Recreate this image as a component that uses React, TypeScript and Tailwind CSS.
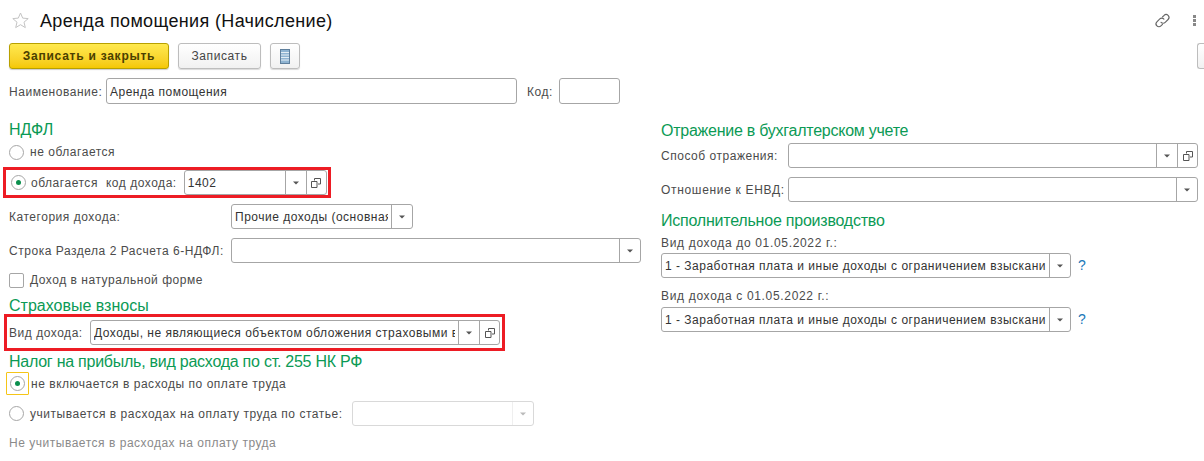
import React from 'react';

const labelCls = 'text-[12px] leading-[16px] text-[#4b4b4b] tracking-[0.53px] whitespace-nowrap';

const Caret = () => (
  <svg width="6" height="4" viewBox="0 0 6 4" className="block">
    <path d="M0 .5h6L3 3.500z" fill="#555" />
  </svg>
);

const OpenIcon = () => (
  <svg width="10" height="10" viewBox="0 0 10 10" fill="none" stroke="#555" className="block">
    <path d="M3.500 2.500V.5h6v5.500H7" />
    <path d="M.5 3.500h5.500v6H.5z" />
  </svg>
);

interface FieldProps {
  width: string;
  text?: string;
  dropdown?: boolean;
  open?: boolean;
  disabled?: boolean;
}

const Field: React.FC<FieldProps> = ({ width, text, dropdown, open, disabled }) => (
  <div className={`${width} h-[25px] shrink-0 flex items-stretch rounded-[3px] border bg-white ${disabled ? 'border-[#d9d9d9]' : 'border-[#a6a6a6]'}`}>
    <div className="flex-1 min-w-0 overflow-hidden mx-[3px] flex items-center text-[12px] text-[#333] tracking-[0.5px] whitespace-nowrap">{text}</div>
    {dropdown && (
      <div className={`w-[21px] flex items-center justify-center border-l ${disabled ? 'border-[#d9d9d9] opacity-40' : 'border-[#a6a6a6]'}`}>
        <Caret />
      </div>
    )}
    {open && (
      <div className="w-[20px] flex items-center justify-center border-l border-[#a6a6a6]">
        <OpenIcon />
      </div>
    )}
  </div>
);

const Radio = ({ checked }: { checked?: boolean }) => (
  <span className="w-[15px] h-[15px] shrink-0 rounded-full border border-[#a6a6a6] bg-white flex items-center justify-center">
    {checked && <span className="w-[5px] h-[5px] rounded-full bg-[#0b8f4d]" />}
  </span>
);

const Heading = ({ children, className }: { children: React.ReactNode; className?: string }) => (
  <div className={`text-[16px] leading-[18px] text-[#0b9a55] whitespace-nowrap ${className ?? ''}`}>{children}</div>
);

const App: React.FC = () => {
  return (
    <div className="w-[1204px] h-[461px] overflow-hidden bg-white font-['Liberation_Sans',sans-serif]">
      {/* Title */}
      <div className="h-[43px] pl-[12px] pt-[11px] flex items-start">
        <svg width="17" height="17" viewBox="0 0 17 17" fill="#fff" stroke="#c4c4c4" className="block mt-[1px]">
          <path d="M8.500 1l2.200 5.100 5.500.5-4.200 3.600 1.300 5.400-4.800-2.900-4.800 2.900 1.300-5.400L.8 6.600l5.500-.5z" />
        </svg>
        <div className="ml-[11px] text-[18px] leading-[21px] text-[#111] tracking-[0.35px] whitespace-nowrap">Аренда помощения (Начисление)</div>
        <div className="ml-auto flex items-center">
          <svg width="17" height="17" viewBox="0 0 24 24" fill="none" stroke="#666" strokeWidth="1.600" strokeLinecap="round" className="block mt-[1px]">
            <path d="M10 14.500a4 4 0 0 0 5.800.2l4.100-4.100a4 4 0 0 0-5.700-5.700L12 7" />
            <path d="M14 10a4 4 0 0 0-5.800-.2L4.100 13.900a4 4 0 0 0 5.700 5.700L12 17.500" />
          </svg>
          <div className="ml-[22px] mr-[8px] flex flex-col gap-[1px]">
            <span className="w-[3px] h-[3px] bg-[#888]" />
            <span className="w-[3px] h-[3px] bg-[#888]" />
            <span className="w-[3px] h-[3px] bg-[#888]" />
          </div>
        </div>
      </div>

      {/* Toolbar */}
      <div className="h-[26px] pl-[9px] flex items-stretch">
        <button className="w-[160px] rounded-[3px] border border-[#b8a000] bg-gradient-to-b from-[#ffe94d] to-[#f5c800] text-[12px] font-bold tracking-[0.75px] text-[#4a4000] shadow-[0_1px_1px_rgba(0,0,0,0.2)]">
          Записать и закрыть
        </button>
        <button className="ml-[9px] w-[83px] rounded-[3px] border border-[#bdbdbd] bg-gradient-to-b from-white to-[#f1f1f1] text-[12px] tracking-[0.6px] text-[#444] shadow-[0_1px_1px_rgba(0,0,0,0.15)]">
          Записать
        </button>
        <button className="ml-[9px] w-[30px] rounded-[3px] border border-[#bdbdbd] bg-gradient-to-b from-white to-[#f1f1f1] flex items-center justify-center shadow-[0_1px_1px_rgba(0,0,0,0.15)]">
          <svg width="10" height="15" viewBox="0 0 10 15" className="block">
            <rect x="0.500" y="0.500" width="9" height="14" fill="#8fb4d2" stroke="#5f7f9c" />
            <path d="M1 3.500h8M1 6h8M1 8.500h8M1 11h8" stroke="#e4edf4" />
          </svg>
        </button>
        <div className="ml-auto w-[7px] rounded-l-[3px] border border-r-0 border-[#bdbdbd] bg-gradient-to-b from-white to-[#f1f1f1]" />
      </div>

      {/* Name row */}
      <div className="mt-[9px] h-[26px] pl-[9px] flex items-center">
        <span className={`${labelCls} w-[97px] pt-[2px] tracking-[0.45px]`}>Наименование:</span>
        <div className="w-[411px] h-[26px] flex items-center rounded-[3px] border border-[#a6a6a6] px-[3px] pt-[2px] text-[12px] text-[#333] tracking-[0.5px]">Аренда помощения</div>
        <span className={`${labelCls} ml-[10px] w-[32px] pt-[2px]`}>Код:</span>
        <div className="w-[61px] h-[26px] rounded-[3px] border border-[#a6a6a6]" />
      </div>

      {/* Two columns */}
      <div className="flex">
        {/* Left column */}
        <div className="w-[661px] shrink-0 pl-[9px]">
          <Heading className="mt-[17px]">НДФЛ</Heading>
          <div className="mt-[5px] h-[16px] flex items-center gap-[6px]">
            <Radio />
            <span className={labelCls}>не облагается</span>
          </div>

          <div className="mt-[7px] -ml-[6px] w-[328px] h-[31px] border-[3px] border-[#ed1c24] flex items-center pl-[5px]">
            <Radio checked />
            <span className={`${labelCls} ml-[5px]`}>облагается</span>
            <span className={`${labelCls} ml-[8px] tracking-[0.7px]`}>код дохода:</span>
            <div className="ml-[7px]">
              <Field width="w-[143px]" text="1402" dropdown open />
            </div>
          </div>

          <div className="mt-[6px] h-[25px] flex items-center">
            <span className={`${labelCls} w-[222px]`}>Категория дохода:</span>
            <Field width="w-[182px]" text="Прочие доходы (основная налоговая база)" dropdown />
          </div>

          <div className="mt-[9px] h-[25px] flex items-center">
            <span className={`${labelCls} w-[222px] tracking-[0.42px]`}>Строка Раздела 2 Расчета 6-НДФЛ:</span>
            <Field width="w-[410px]" dropdown />
          </div>

          <div className="mt-[9px] h-[16px] flex items-center gap-[6px]">
            <span className="w-[15px] h-[15px] rounded-[2px] border border-[#a6a6a6] bg-white" />
            <span className={labelCls}>Доход в натуральной форме</span>
          </div>

          <Heading className="mt-[9px]">Страховые взносы</Heading>

          <div className="-mt-[1px] -ml-[5px] w-[501px] h-[37px] border-[3px] border-[#ed1c24] flex items-center pl-[2px]">
            <span className={`${labelCls} w-[81px] tracking-[0.7px]`}>Вид дохода:</span>
            <Field width="w-[410px]" text="Доходы, не являющиеся объектом обложения страховыми взносами" dropdown open />
          </div>

          <Heading className="mt-[2px] tracking-[-0.25px]">Налог на прибыль, вид расхода по ст. 255 НК РФ</Heading>

          <div className="mt-[1px] -ml-[3px] h-[23px] flex items-center">
            <span className="w-[23px] h-[23px] shrink-0 border border-[#f5c518] flex items-center justify-center rounded-[1px]">
              <Radio checked />
            </span>
            <span className={`${labelCls} ml-[2px]`}>не включается в расходы по оплате труда</span>
          </div>

          <div className="mt-[6px] h-[25px] flex items-center">
            <Radio />
            <span className={`${labelCls} ml-[6px] w-[322px]`}>учитывается в расходах на оплату труда по статье:</span>
            <Field width="w-[182px]" dropdown disabled />
          </div>

          <div className="mt-[9px] text-[12px] leading-[16px] text-[#8a8a8a] tracking-[0.52px] whitespace-nowrap">Не учитывается в расходах на оплату труда</div>
        </div>

        {/* Right column */}
        <div className="flex-1 min-w-0">
          <Heading className="mt-[18px] tracking-[-0.25px]">Отражение в бухгалтерском учете</Heading>
          <div className="mt-[3px] h-[25px] flex items-center">
            <span className={`${labelCls} w-[127px]`}>Способ отражения:</span>
            <Field width="w-[410px]" dropdown open />
          </div>
          <div className="mt-[9px] h-[25px] flex items-center">
            <span className={`${labelCls} w-[127px] tracking-[0.68px]`}>Отношение к ЕНВД:</span>
            <Field width="w-[410px]" dropdown />
          </div>
          <Heading className="mt-[10px] tracking-[-0.22px]">Исполнительное производство</Heading>
          <div className={`${labelCls} mt-[5px] tracking-[0.67px]`}>Вид дохода до 01.05.2022 г.:</div>
          <div className="mt-[2px] h-[25px] flex items-center">
            <Field width="w-[410px]" text="1 - Заработная плата и иные доходы с ограничением взыскания" dropdown />
            <span className="ml-[7px] text-[14px] text-[#1b78b8]">?</span>
          </div>
          <div className={`${labelCls} mt-[10px] tracking-[0.67px]`}>Вид дохода с 01.05.2022 г.:</div>
          <div className="mt-[3px] h-[25px] flex items-center">
            <Field width="w-[410px]" text="1 - Заработная плата и иные доходы с ограничением взыскания" dropdown />
            <span className="ml-[7px] text-[14px] text-[#1b78b8]">?</span>
          </div>
        </div>
      </div>
    </div>
  );
};

export default App;
